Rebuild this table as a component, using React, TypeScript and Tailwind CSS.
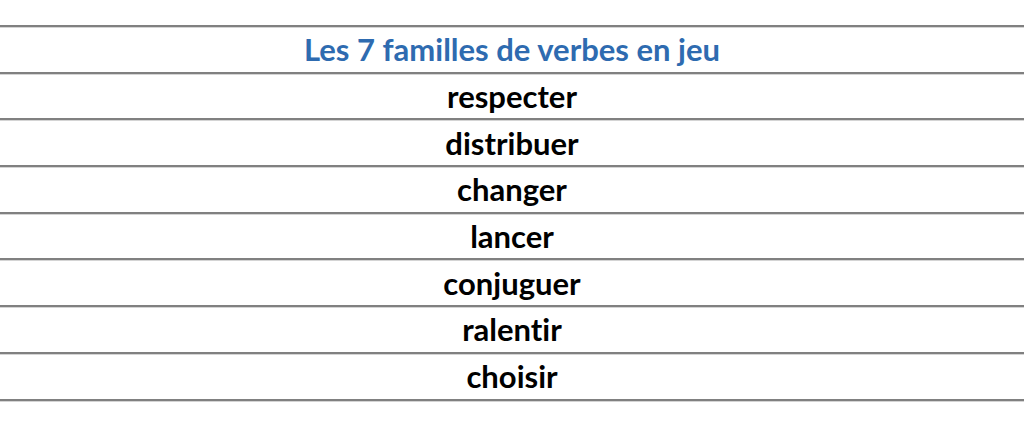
const verbs = ["respecter", "distribuer", "changer", "lancer", "conjuguer", "ralentir", "choisir"];

function Rule() {
  return (
    <div className="flex flex-col">
      <div className="h-[2px] bg-[#808080]" />
      <div className="h-px bg-[#d4d4d4]" />
    </div>
  );
}

export default function App() {
  return (
    <div className="w-[1024px] h-[422px] bg-white pt-[25px] overflow-hidden [font-variant-ligatures:none]" style={{ fontFamily: "Lato, 'Open Sans', sans-serif" }}>
      <Rule />
      <div className="h-[43.7px] flex items-center justify-center text-[31px] font-bold text-[#2e6bb0] leading-none">
        Les 7 familles de verbes en jeu
      </div>
      {verbs.map((v) => (
        <div key={v}>
          <Rule />
          <div className="h-[43.7px] flex items-center justify-center text-[31px] font-bold text-black leading-none">
            {v}
          </div>
        </div>
      ))}
      <Rule />
    </div>
  );
}
